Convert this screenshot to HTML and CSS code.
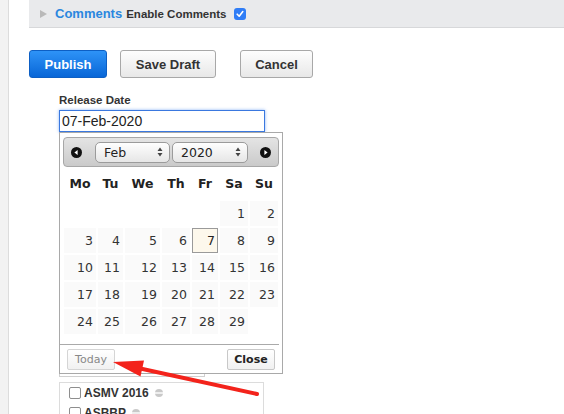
FILE: index.html
```html
<!DOCTYPE html>
<html lang="en">
<head>
    <meta charset="utf-8"/>
    <title>Edit Release</title>

    <link rel="stylesheet" href="styles.css">
</head>
<body>
    <div class="layout">
        <aside class="rail"></aside>
        <main class="content">
            <div class="comments-bar">
                <span class="toggle"></span>
                <a class="section-link" href="#">Comments</a>
                <label class="inline-check">
                    Enable Comments
                    <span class="check checked">
                        <svg width="8" height="8" viewBox="0 0 8 8"><path d="M1.2 4.2 L3.2 6.2 L6.8 1.6" fill="none" stroke="#fff" stroke-width="1.6" stroke-linecap="round" stroke-linejoin="round"/></svg>
                    </span>
                </label>
            </div>

            <div class="actions">
                <button class="btn btn-primary">Publish</button>
                <button class="btn btn-draft">Save Draft</button>
                <button class="btn btn-cancel">Cancel</button>
            </div>

            <div class="field">
                <label class="field-label">Release Date</label>
                <div class="date-wrap">
                    <input class="date-input" type="text" value="07-Feb-2020"/>

                    <div class="datepicker">
                        <div class="dp-header">
                            <span class="dp-nav">
                                <svg width="11" height="11" viewBox="0 0 11 11"><circle cx="5.5" cy="5.5" r="5.5" fill="#111"/><path d="M3.4 5.5 L6.6 3 L6.6 8 Z" fill="#fff"/></svg>
                            </span>
                            <div class="dp-select dp-month">
                                <span>Feb</span>
                                <svg width="6" height="10" viewBox="0 0 6 10"><path d="M3 0.5 L5.5 4 L0.5 4 Z M3 9.5 L5.5 6 L0.5 6 Z" fill="#444"/></svg>
                            </div>
                            <div class="dp-select dp-year">
                                <span>2020</span>
                                <svg width="6" height="10" viewBox="0 0 6 10"><path d="M3 0.5 L5.5 4 L0.5 4 Z M3 9.5 L5.5 6 L0.5 6 Z" fill="#444"/></svg>
                            </div>
                            <span class="dp-nav dp-next">
                                <svg width="11" height="11" viewBox="0 0 11 11"><circle cx="5.5" cy="5.5" r="5.5" fill="#111"/><path d="M7.6 5.5 L4.4 3 L4.4 8 Z" fill="#fff"/></svg>
                            </span>
                        </div>

                        <table class="dp-cal">
                            <thead>
                                <tr><th>Mo</th><th>Tu</th><th>We</th><th>Th</th><th>Fr</th><th>Sa</th><th>Su</th></tr>
                            </thead>
                            <tbody>
                                <tr><td></td><td></td><td></td><td></td><td></td><td><a href="#">1</a></td><td><a href="#">2</a></td></tr>
                                <tr><td><a href="#">3</a></td><td><a href="#">4</a></td><td><a href="#">5</a></td><td><a href="#">6</a></td><td class="is-current"><a href="#">7</a></td><td><a href="#">8</a></td><td><a href="#">9</a></td></tr>
                                <tr><td><a href="#">10</a></td><td><a href="#">11</a></td><td><a href="#">12</a></td><td><a href="#">13</a></td><td><a href="#">14</a></td><td><a href="#">15</a></td><td><a href="#">16</a></td></tr>
                                <tr><td><a href="#">17</a></td><td><a href="#">18</a></td><td><a href="#">19</a></td><td><a href="#">20</a></td><td><a href="#">21</a></td><td><a href="#">22</a></td><td><a href="#">23</a></td></tr>
                                <tr><td><a href="#">24</a></td><td><a href="#">25</a></td><td><a href="#">26</a></td><td><a href="#">27</a></td><td><a href="#">28</a></td><td><a href="#">29</a></td><td></td></tr>
                            </tbody>
                        </table>

                        <div class="dp-buttons">
                            <button class="dp-btn">Today</button>
                            <button class="dp-btn dp-close">Close</button>
                        </div>
                    </div>
                </div>

                <div class="tag-box"></div>

                <div class="checklist">
                    <label class="check-row"><span class="check"></span>ASMV 2016<span class="minus"></span></label>
                    <label class="check-row"><span class="check"></span>ASBBP<span class="minus"></span></label>
                </div>
            </div>
        </main>
    </div>

    <svg class="annotation" width="564" height="414" viewBox="0 0 564 414">
        <line x1="257" y1="394" x2="138" y2="368" stroke="#f3231b" stroke-width="4" stroke-linecap="round"/>
        <polygon points="113,362 144,360.5 140.5,376.5" fill="#f3231b"/>
    </svg>
</body>
</html>
```

FILE: styles.css
```css
body {
    margin: 0;
    font-family: "Liberation Sans", Arial, sans-serif;
    color: #333;
    background-color: #fff;
    position: relative;
    overflow: hidden;
}

.layout {
    display: flex;
    min-height: 414px;
}

.rail {
    width: 8px;
    background-color: #f2f2f2;
    border-right: 1px solid #dcdcdc;
}

.content {
    flex: 1;
}

/* comments bar */

.comments-bar {
    margin-left: 20px;
    height: 27px;
    padding-left: 11px;
    background-color: #e9eaec;
    border-bottom: 1px solid #d7d8da;
    display: flex;
    align-items: center;
}

.toggle {
    width: 0;
    height: 0;
    border-left: 7px solid #b9b9b9;
    border-top: 4.5px solid transparent;
    border-bottom: 4.5px solid transparent;
    margin-right: 8px;
}

.section-link {
    color: #2b87df;
    font-size: 13px;
    font-weight: bold;
    text-decoration: none;
    margin-right: 4px;
}

.inline-check {
    display: flex;
    align-items: center;
    gap: 7px;
    font-size: 11.5px;
    font-weight: bold;
    color: #333;
}

.check {
    width: 12px;
    height: 12px;
    box-sizing: border-box;
    border: 1px solid #8e8e8e;
    border-radius: 2px;
    background-color: #fff;
    display: inline-flex;
    align-items: center;
    justify-content: center;
}

.check.checked {
    border: 0;
    border-radius: 3px;
    background-color: #2f7df6;
}

/* action buttons */

.actions {
    display: flex;
    margin: 22px 0 0 20px;
}

.btn {
    height: 28px;
    padding: 0;
    font-family: "Liberation Sans", Arial, sans-serif;
    font-size: 13px;
    font-weight: bold;
    color: #333;
    border: 1px solid #a8a8a8;
    border-radius: 3px;
    background: linear-gradient(#fdfdfd, #e8e8e8);
}

.btn-primary {
    width: 78px;
    color: #fff;
    border-color: #0d5fc4;
    background: linear-gradient(#2e93f7, #0866d7);
}

.btn-draft {
    width: 96px;
    margin-left: 13px;
}

.btn-cancel {
    width: 73px;
    margin-left: 24px;
}

/* release date field */

.field {
    margin: 15px 0 0 50px;
}

.field-label {
    display: block;
    font-size: 11.5px;
    font-weight: bold;
    line-height: 14px;
    margin-bottom: 3px;
    color: #333;
}

.date-wrap {
    position: relative;
    width: 206px;
}

.date-input {
    display: block;
    box-sizing: border-box;
    width: 206px;
    height: 22px;
    padding: 0 2px;
    font-family: "Liberation Sans", Arial, sans-serif;
    font-size: 14px;
    color: #222;
    border: 1px solid #3a78df;
    box-shadow: 0 0 3px rgba(60, 130, 240, 0.6);
    outline: none;
}

/* datepicker popup */

.datepicker {
    position: absolute;
    top: 100%;
    left: 0;
    z-index: 2;
    width: 224px;
    box-sizing: border-box;
    padding: 4px 3px 3px;
    border: 1px solid #a9a9a9;
    background-color: #fff;
    font-family: "DejaVu Sans", Verdana, sans-serif;
}

.dp-header {
    height: 30px;
    box-sizing: border-box;
    padding-left: 7px;
    border: 1px solid #a7a7a7;
    border-radius: 4px;
    background: linear-gradient(#e4e4e4, #cacaca);
    display: flex;
    align-items: center;
}

.dp-nav {
    display: flex;
}

.dp-next {
    margin-left: 12px;
}

.dp-select {
    height: 21px;
    box-sizing: border-box;
    padding-left: 8px;
    border: 1px solid #9b9b9b;
    border-radius: 5px;
    background: linear-gradient(#fefefe, #e6e6e6);
    font-size: 12.5px;
    color: #222;
    display: flex;
    align-items: center;
}

.dp-select svg {
    margin-left: auto;
    margin-right: 6px;
}

.dp-month {
    width: 75px;
    margin-left: 13px;
}

.dp-year {
    width: 76px;
    margin-left: 2px;
}

.dp-cal {
    width: 100%;
    border-collapse: collapse;
    table-layout: fixed;
    font-size: 12.5px;
}

.dp-cal th {
    padding: 9px 0;
    line-height: 15px;
    font-weight: bold;
    color: #222;
    text-align: center;
}

.dp-cal th:nth-child(1) { width: 34px; }
.dp-cal th:nth-child(2) { width: 27px; }
.dp-cal th:nth-child(3) { width: 37px; }
.dp-cal th:nth-child(4) { width: 30px; }
.dp-cal th:nth-child(5) { width: 28px; }
.dp-cal th:nth-child(6) { width: 30px; }
.dp-cal th:nth-child(7) { width: 30px; }

.dp-cal td {
    padding: 1px;
}

.dp-cal td a {
    display: block;
    padding: 3px 2px 3px 0;
    line-height: 17px;
    text-align: right;
    color: #333;
    text-decoration: none;
    border: 1px solid #fafafa;
    background-color: #fafafa;
}

.dp-cal td.is-current a {
    color: #222;
    border-color: #9a9a9a;
    background-color: #fdf8ec;
}

.dp-buttons {
    display: flex;
    justify-content: space-between;
    margin: 9px 0 0 -3px;
    padding: 4px 4px 0 7px;
    border-top: 1px solid #aaa;
}

.dp-btn {
    width: 48px;
    height: 21px;
    padding: 0;
    font-family: "DejaVu Sans", Verdana, sans-serif;
    font-size: 11px;
    color: #888;
    border: 1px solid #d5d5d5;
    border-radius: 2px;
    background: linear-gradient(#fff, #f1f1f1);
}

.dp-close {
    color: #222;
    font-weight: bold;
    border-color: #c8c8c8;
}

/* things under the popup */

.tag-box {
    width: 146px;
    height: 237px;
    box-sizing: border-box;
    margin-top: 8px;
    border: 1px solid #d0d0d0;
}

.checklist {
    width: 205px;
    height: 60px;
    box-sizing: border-box;
    margin-top: 5px;
    padding-left: 9px;
    border: 1px solid #dcdcdc;
}

.check-row {
    height: 20px;
    display: flex;
    align-items: center;
    gap: 3px;
    font-size: 12px;
    font-weight: bold;
    color: #333;
}

.minus {
    width: 8px;
    height: 8px;
    margin-left: 3px;
    border-radius: 50%;
    background: linear-gradient(#c9c9c9 0 40%, #eee 40% 60%, #c9c9c9 60%);
}

.annotation {
    position: absolute;
    top: 0;
    left: 0;
    pointer-events: none;
    z-index: 5;
}
```
